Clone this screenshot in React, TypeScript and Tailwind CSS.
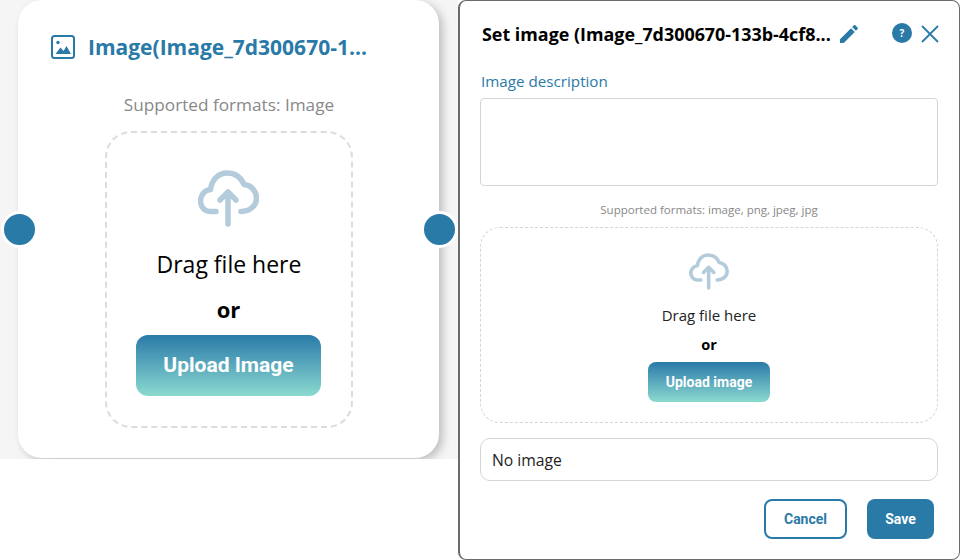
import React from "react";

function Cloud({ className }: { className: string }) {
  return (
    <svg viewBox="0 0 61 57" fill="none" stroke="#b3cbda" strokeWidth="5.5" strokeLinecap="round" strokeLinejoin="round" className={className}>
      <path d="M18 41.5H12C6 41.5 2.5 36 2.5 31C2.5 25 7 20 12.5 19.5C14 9 21 3 29 3C37 3 43 7.5 46 14.5C53 15 58.5 21 58.5 28C58.5 35.5 52 41.5 43 41.5" />
      <path d="M30 54V22M22 30L30 22L38 30" />
    </svg>
  );
}

function Port({ className }: { className: string }) {
  return <div className={`absolute top-[211px] h-[37px] w-[37px] rounded-full border-[3px] border-white bg-[#2a7aa8] ${className}`} />;
}

export default function App() {
  return (
    <div className="flex h-[560px] w-[960px] items-start overflow-hidden bg-white font-['Open_Sans','Noto_Sans',sans-serif]">
      <div className="relative h-[459px] w-[458px] shrink-0 overflow-hidden bg-[#f5f5f5] pl-[18px]">
        <div className="flex h-[458px] w-[421px] flex-col items-center rounded-[24px] bg-white shadow-[4px_3px_8px_rgba(0,0,0,0.22)]">
          <div className="flex w-full items-center gap-[13px] pl-[33px] pt-[33px]">
            <svg viewBox="0 0 24 24" className="h-[24px] w-[24px] shrink-0">
              <rect x="1" y="1" width="22" height="22" rx="2.5" fill="none" stroke="#2a7aa8" strokeWidth="2" />
              <circle cx="7" cy="7.5" r="1.7" fill="#2a7aa8" />
              <path d="M4.5 19L9.5 12.5L12.5 16L15.5 11L20 19Z" fill="#2a7aa8" />
            </svg>
            <span className="text-[21px] leading-[28px] font-bold text-[#2a7aa8]">Image(Image_7d300670-1...</span>
          </div>
          <div className="mt-[32px] pl-px text-[17.2px] leading-[24px] text-[#888888]">Supported formats: Image</div>
          <div className="mt-[14px] flex h-[297px] w-[248px] flex-col items-center rounded-[26px] border-2 border-dashed border-[#dcdcdc] pt-[37px]">
            <Cloud className="h-[57px] w-[61px]" />
            <div className="mt-[22px] pl-px text-[23px] leading-[30px] text-black">Drag file here</div>
            <div className="mt-[15px] text-[22px] leading-[30px] font-bold text-black">or</div>
            <div className="mt-[11px] flex h-[61px] w-[185px] items-center justify-center rounded-[12px] bg-gradient-to-b from-[#2a7aa8] to-[#8bdacf] pt-px font-['Roboto',sans-serif] text-[21px] font-bold text-white">Upload Image</div>
          </div>
        </div>
        <Port className="left-[1px]" />
        <Port className="left-[421px]" />
      </div>

      <div className="flex h-[560px] w-[502px] shrink-0 flex-col rounded-[8px] border-t border-r border-b border-l-2 border-[#6b6b6b] bg-white pl-[20px] pr-[21px]">
        <div className="flex items-center pt-[18px]">
          <span className="ml-[2px] text-[17.9px] leading-[30px] font-bold text-black">Set image (Image_7d300670-133b-4cf8...</span>
          <svg viewBox="0 0 24 24" className="ml-[6px] h-[24px] w-[24px] shrink-0" fill="#2a7aa8">
            <path d="M3 17.25V21h3.75L17.81 9.94l-3.75-3.75L3 17.25zM20.71 7.04c.39-.39.39-1.02 0-1.41l-2.34-2.34c-.39-.39-1.02-.39-1.41 0l-1.83 1.83 3.75 3.75 1.83-1.83z" />
          </svg>
          <div className="ml-auto flex h-[20px] w-[20px] shrink-0 -translate-y-[1px] items-center justify-center rounded-full bg-[#2a7aa8] text-[10px] font-bold text-white">?</div>
          <svg viewBox="0 0 18 18" className="mr-[-1px] ml-[9px] h-[18px] w-[18px] shrink-0" fill="none" stroke="#2a7aa8" strokeWidth="1.8">
            <path d="M1 1L17 17M17 1L1 17" />
          </svg>
        </div>
        <div className="mt-[22px] ml-px text-[15.2px] leading-[20px] text-[#2a7aa8]">Image description</div>
        <div className="mt-[7px] h-[88px] w-[458px] rounded-[4px] border border-[#d5d5d5]" />
        <div className="mt-[16px] text-center text-[11.5px] leading-[16px] text-[#888888]">Supported formats: image, png, jpeg, jpg</div>
        <div className="mt-[9px] flex h-[196px] w-[458px] flex-col items-center rounded-[20px] border border-dashed border-[#d5d5d5] pt-[25px]">
          <Cloud className="h-[37px] w-[40px]" />
          <div className="mt-[15px] text-[15px] leading-[20px] text-[#222222]">Drag file here</div>
          <div className="mt-[10px] text-[14.5px] leading-[20px] font-bold text-black">or</div>
          <div className="mt-[7px] flex h-[40px] w-[122px] items-center justify-center rounded-[8px] bg-gradient-to-b from-[#2a7aa8] to-[#8bdacf] font-['Roboto',sans-serif] text-[14px] font-bold text-white">Upload image</div>
        </div>
        <div className="mt-[15px] flex h-[43px] w-[458px] items-center rounded-[10px] border border-[#d5d5d5] pt-[2px] pl-[11px] text-[15.7px] text-[#222222]">No image</div>
        <div className="mt-[18px] mr-[4px] flex justify-end gap-[20px] font-['Roboto',sans-serif] text-[14px] font-bold">
          <div className="flex h-[40px] w-[83px] items-center justify-center rounded-[8px] border-2 border-[#2a7aa8] text-[#2a7aa8]">Cancel</div>
          <div className="flex h-[40px] w-[67px] items-center justify-center rounded-[8px] bg-[#2a7aa8] text-white">Save</div>
        </div>
      </div>
    </div>
  );
}
